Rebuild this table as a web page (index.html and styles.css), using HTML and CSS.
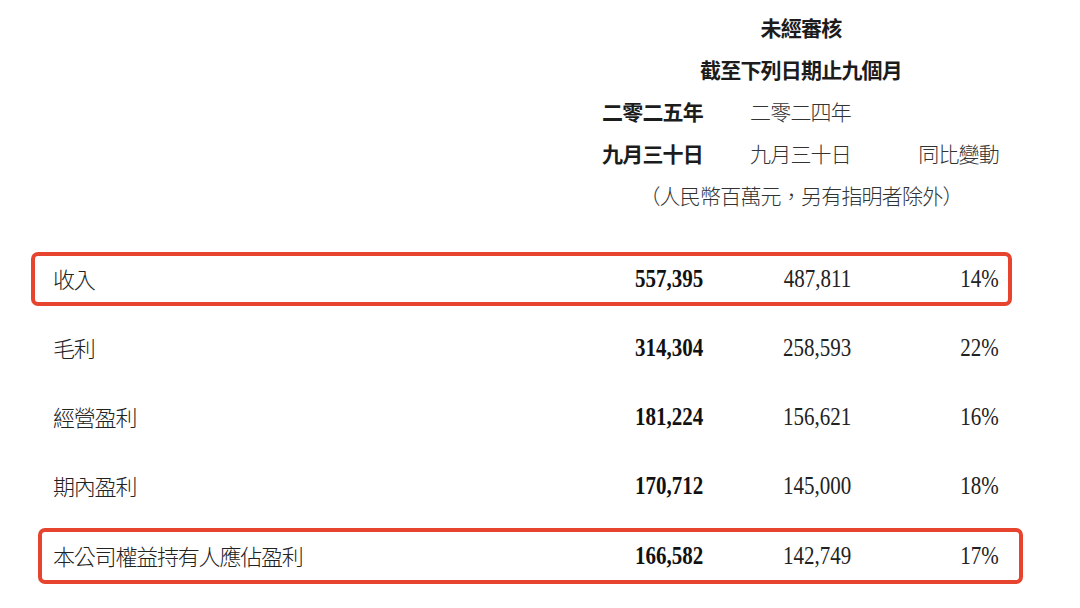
FILE: index.html
```html
<!DOCTYPE html>
<html lang="zh-Hant">
<head>
<meta charset="utf-8">
<link rel="stylesheet" href="styles.css">
</head>
<body>
<div class="page">
  <div class="head">
    <div class="title">未經審核</div>
    <div class="title">截至下列日期止九個月</div>
    <div class="c1">二零二五年</div>
    <div class="c2">二零二四年</div>
    <div class="c1">九月三十日</div>
    <div class="c2">九月三十日</div>
    <div class="c3">同比變動</div>
    <div class="note">（人民幣百萬元，另有指明者除外）</div>
  </div>
  <div class="rows">
    <div class="row hl1">
      <div class="label">收入</div>
      <div class="num bold"><span>557,395</span></div>
      <div class="num"><span>487,811</span></div>
      <div class="num"><span>14%</span></div>
    </div>
    <div class="row">
      <div class="label">毛利</div>
      <div class="num bold"><span>314,304</span></div>
      <div class="num"><span>258,593</span></div>
      <div class="num"><span>22%</span></div>
    </div>
    <div class="row">
      <div class="label">經營盈利</div>
      <div class="num bold"><span>181,224</span></div>
      <div class="num"><span>156,621</span></div>
      <div class="num"><span>16%</span></div>
    </div>
    <div class="row">
      <div class="label">期內盈利</div>
      <div class="num bold"><span>170,712</span></div>
      <div class="num"><span>145,000</span></div>
      <div class="num"><span>18%</span></div>
    </div>
    <div class="row hl2">
      <div class="label">本公司權益持有人應佔盈利</div>
      <div class="num bold"><span>166,582</span></div>
      <div class="num"><span>142,749</span></div>
      <div class="num"><span>17%</span></div>
    </div>
  </div>
</div>
</body>
</html>
```

FILE: styles.css
```css
html, body {
  margin: 0;
  padding: 0;
  background: #ffffff;
}

body {
  font-family: "Noto Sans CJK TC", "Noto Sans CJK SC", sans-serif;
  color: #1c1c1c;
}

.page {
  padding-top: 7px;
}

.head {
  display: grid;
  grid-template-columns: 530px 120px 148px 148px;
  margin-left: 53px;
  font-size: 21px;
  letter-spacing: -0.8px;
  line-height: 40px;
}

.head > div {
  height: 42px;
  box-sizing: border-box;
  padding-bottom: 2px;
}

.head .title {
  grid-column: 2 / 5;
  text-align: center;
  padding-left: 20px;
  font-weight: 700;
}

.head .c1 {
  grid-column: 2;
  text-align: right;
  font-weight: 700;
}

.head .c2 {
  grid-column: 3;
  text-align: right;
  color: #333;
  font-weight: 300;
}

.head .c3 {
  grid-column: 4;
  text-align: right;
  color: #333;
  font-weight: 300;
}

.head .note {
  grid-column: 2 / 5;
  text-align: center;
  padding-left: 20px;
  color: #333;
  font-weight: 300;
}

.rows {
  margin-top: 35px;
  display: flex;
  flex-direction: column;
  gap: 15px;
}

.row {
  display: grid;
  grid-template-columns: 530px 120px 148px 148px;
  align-items: center;
  height: 54px;
  box-sizing: border-box;
  margin-left: 53px;
  width: 946px;
}

.row.hl1 {
  margin-left: 31px;
  width: 981px;
  padding: 0 9px 0 18px;
  border: 4px solid #e6442e;
  border-radius: 7px;
}

.row.hl2 {
  margin-left: 38px;
  width: 985px;
  height: 56px;
  padding: 0 20px 0 11px;
  border: 4px solid #e6442e;
  border-radius: 7px;
}

.label {
  font-size: 22px;
  letter-spacing: -1.2px;
  font-weight: 300;
  color: #222;
  padding-bottom: 3px;
}

.num {
  font-family: "Liberation Serif", serif;
  font-size: 25px;
  text-align: right;
  color: #222;
}

.num span {
  display: inline-block;
  transform: scaleX(0.84);
  transform-origin: right center;
}

.num.bold {
  font-weight: 700;
  color: #111;
}
```
